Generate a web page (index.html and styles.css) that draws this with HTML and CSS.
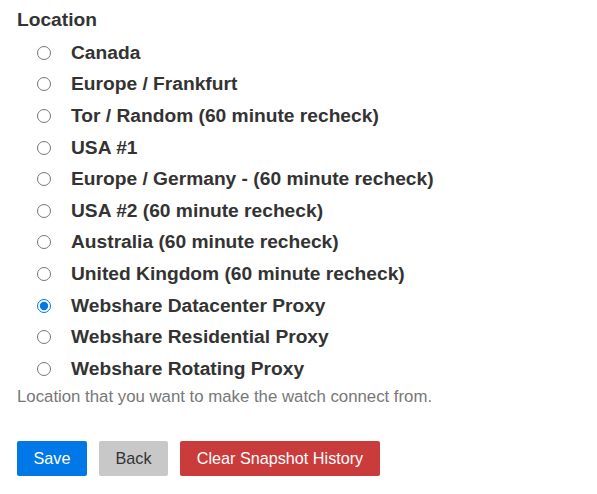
FILE: index.html
```html
<!DOCTYPE html>
<html>
<head>
<meta charset="utf-8">
<link rel="stylesheet" href="styles.css">
</head>
<body>
<div class="page">
  <div class="field">
    <div class="label">Location</div>
    <ul class="options">
      <li><input type="radio" name="loc"><span>Canada</span></li>
      <li><input type="radio" name="loc"><span>Europe / Frankfurt</span></li>
      <li><input type="radio" name="loc"><span>Tor / Random (60 minute recheck)</span></li>
      <li><input type="radio" name="loc"><span>USA #1</span></li>
      <li><input type="radio" name="loc"><span>Europe / Germany - (60 minute recheck)</span></li>
      <li><input type="radio" name="loc"><span>USA #2 (60 minute recheck)</span></li>
      <li><input type="radio" name="loc"><span>Australia (60 minute recheck)</span></li>
      <li><input type="radio" name="loc"><span>United Kingdom (60 minute recheck)</span></li>
      <li><input type="radio" name="loc" checked><span>Webshare Datacenter Proxy</span></li>
      <li><input type="radio" name="loc"><span>Webshare Residential Proxy</span></li>
      <li><input type="radio" name="loc"><span>Webshare Rotating Proxy</span></li>
    </ul>
    <div class="hint">Location that you want to make the watch connect from.</div>
  </div>
  <div class="actions">
    <button class="btn save">Save</button>
    <button class="btn back">Back</button>
    <button class="btn clear">Clear Snapshot History</button>
  </div>
</div>
</body>
</html>
```
FILE: styles.css
```css
* { box-sizing: border-box; }
body {
  margin: 0;
  background: #fff;
  font-family: "Liberation Sans", Arial, sans-serif;
  color: #333;
}
.page { padding: 8px 17px; }
.label {
  font-weight: bold;
  font-size: 19.2px;
  line-height: 24px;
  color: #333;
}
.options {
  list-style: none;
  margin: 5px 0 0 0;
  padding: 0 0 0 20px;
}
.options li {
  display: flex;
  align-items: center;
  height: 31.6px;
  font-weight: bold;
  font-size: 19.2px;
}
.options input {
  margin: 0 20px 0 0;
  width: 14px;
  height: 14px;
  accent-color: #0078e7;
}
.hint {
  font-size: 16.8px;
  color: #777;
  line-height: 20px;
  margin-top: 2px;
}
.actions {
  display: flex;
  gap: 12px;
  margin-top: 34px;
}
.btn {
  font-family: "Liberation Sans", Arial, sans-serif;
  font-size: 16.2px;
  border: none;
  border-radius: 2px;
  height: 35px;
  padding: 0 16px;
}
.save { background: #0078e7; color: #fff; width: 70px; }
.back { background: #c8c8c8; color: #333; width: 69px; }
.clear { background: #ca3c3c; color: #fff; width: 200px; }
```
